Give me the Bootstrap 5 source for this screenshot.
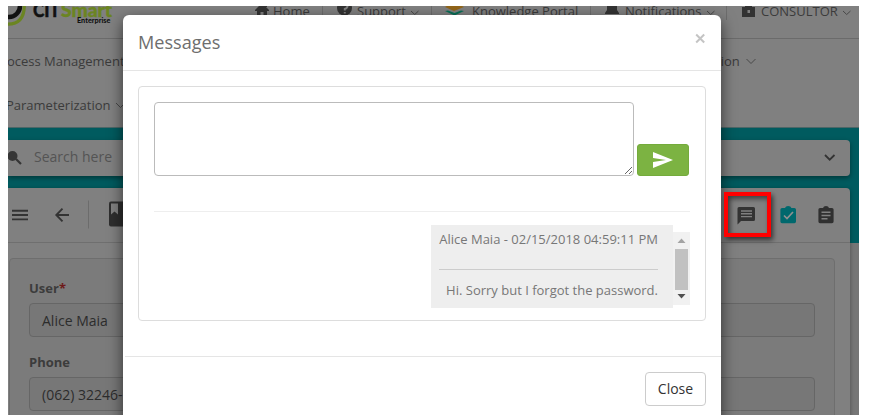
<!DOCTYPE html>
<html lang="en">
<head>
<meta charset="utf-8">
<meta name="viewport" content="width=device-width, initial-scale=1">
<title>Messages</title>
<link href="https://cdn.jsdelivr.net/npm/bootstrap@5.3.0/dist/css/bootstrap.min.css" rel="stylesheet">
<style>
body{background:#fff;font-family:"Open Sans",sans-serif;font-size:13px;line-height:18px;color:#3b3b3b;overflow:hidden}
svg{display:block;flex:none}
.app-shell{width:851px;height:409px;margin:6px 0 0 8px;background:#767676}
.top-row{height:33px;background:#808080;border-bottom:1px solid #6b6b6b}
.brand-box{width:233px;height:32px}
.top-cell{height:14px;border-right:1px solid #6d6d6d}
.top-cell span{line-height:18px;margin:-4px 0 0 -1px;display:block}
.c-home{width:82px;padding-left:14px}.c-sup{width:109px;padding-left:14px}.c-know{width:159px;padding-left:13px}.c-not{width:136px;padding-left:14px}.c-user{border:0;padding-left:15px}
.c-home span{margin-left:0}
.menu-area{height:89px;background:#808080;border-bottom:1px solid #4c6667}
.menu-line{height:44px}
.menu-line .r{margin-left:auto;width:143px}
.menu-line>span{margin-left:-1px}
.menu-line+.menu-line>span{margin-left:-2px}
.teal-zone{height:115px;background:#005b5f;padding-top:12px}
.search-strip{width:842px;height:36px;background:#808080;border-radius:0 4px 4px 0;box-shadow:0 2px 5px rgba(0,0,0,.4);font-size:14px;color:#545454;padding-right:13px}
.search-strip span{margin-top:-2px}
.work-panel{width:842px;height:240px;margin-top:12px;background:#808080;border-radius:0 4px 0 0;box-shadow:0 1px 4px rgba(0,0,0,.35)}
.tool-row{height:55px;border-bottom:1px solid #6f6f6f;padding-right:6px}
.form-box{width:826px;margin:15px 0 0 1px;height:190px;border:1px solid #6e6e6e;border-radius:4px;background:#7b7b7b;padding:19px 19px 0}
.form-box label{display:block;font-weight:700;font-size:13px;line-height:20px;height:25px;color:#3c3c3c}
.form-box .form-control{height:34px;margin-bottom:15px;background:#777;border:1px solid #666;border-radius:4px;padding:0 12px;font-size:14px;color:#2c2c2c}
.req{color:#6e1a1a}
.dialog-box{left:115px;top:9px;width:598px;height:420px;background:#fff;border-radius:6px 6px 0 0;box-shadow:0 5px 15px rgba(0,0,0,.6)}
.dialog-head{height:56px;border-bottom:1px solid #e5e5e5;padding:0 15px}
.dialog-head h4{font-size:18.1px;font-weight:400;color:#6e6e6e;line-height:24px;margin-top:-2px}
.thread{margin:15px 15px 0;height:235px;border:1px solid #ddd;border-radius:4px;padding:15px}
.thread textarea{width:480px;height:74px;border:1px solid #bbb;border-radius:4px;resize:vertical;display:block;outline:0}
.send-btn{width:52px;height:32px;margin-left:3px;border-radius:3px;background:#7cb342;border:1px solid #74ab3c}
.rule{height:1px;background:#eee;margin-top:35px}
.feed{margin-top:13px}
.bubble{width:242px;height:83px;background:#eee;color:#777;padding:5px 15px 0 8px;text-align:right;white-space:nowrap}
.bubble .cut{height:1px;background:#ccc;margin:21px 0 11px}
.scroller{width:17px;height:73px;background:#f1f1f1;margin-top:7px}
.thumb{width:13px;height:41px;background:#c1c1c1}
.dialog-foot{margin:35px 0 0 2px;border-top:1px solid #e5e5e5;padding:15px 15px 0}
.dialog-foot .btn{width:61px;height:34px;border:1px solid #ccc;border-radius:4px;background:#fff;color:#333;font-size:14px;padding:0;line-height:32px}
.focus-box{left:716px;top:186px;width:47px;height:45px;border:4px solid #f00;box-shadow:2px 3px 5px rgba(0,0,0,.6),inset 2px 3px 5px rgba(0,0,0,.5)}
</style>
<script src="https://cdn.jsdelivr.net/npm/bootstrap@5.3.0/dist/js/bootstrap.bundle.min.js"></script>
</head>
<body>
<div class="app-shell position-relative overflow-hidden">
  <header class="top-row d-flex">
    <div class="brand-box overflow-hidden">
      <svg width="125" height="32" viewBox="8 6 125 32">
        <circle cx="9" cy="6" r="11" fill="none" stroke="#111" stroke-width="4.500"/>
        <path d="M8 24.200Q24 24 24.300 6" fill="none" stroke="#6b8522" stroke-width="3.200"/>
        <text x="33" y="16.500" font-family="Lato" font-weight="900" font-size="18.500" fill="#111" stroke="#111" stroke-width=".4" textLength="27" lengthAdjust="spacingAndGlyphs">CIT</text>
        <text x="61" y="16.500" font-family="Lato" font-weight="900" font-size="18.500" fill="#6b8522" stroke="#6b8522" stroke-width=".4" textLength="51" lengthAdjust="spacingAndGlyphs">Smart</text>
        <text x="77" y="23" font-family="Lato" font-weight="900" font-size="6.600" fill="#111" textLength="33.500" lengthAdjust="spacingAndGlyphs">Enterprise</text>
      </svg>
    </div>
    <div class="top-cell c-home d-flex"><svg width="18" height="14" viewBox="0 0 18 14"><path fill="#333" d="M0 4L6-2h2l6 6v1h-2v5H8.500V6h-3v4H2V5H0zM10-3h2v4h-2z"/></svg><span>Home</span></div>
    <div class="top-cell c-sup d-flex"><svg width="21" height="14" viewBox="0 0 21 14"><circle cx="7.500" cy="2" r="7.500" fill="#333"/><path d="M5 0q0-3 2.800-3T10.500 0Q10.500 2 7.800 3v1.500M7.800 6v1.600" stroke="#808080" stroke-width="2" fill="none"/></svg><span>Support</span><svg class="ms-1" width="10" height="12" viewBox="0 0 10 12"><path d="M1 5l3.700 3.500L8.500 5" fill="none" stroke="#484848"/></svg></div>
    <div class="top-cell c-know d-flex"><svg width="28" height="14" viewBox="0 0 28 14"><path fill="#936619" d="M0 1l9-5 10 5-10 4z"/><path fill="#087057" d="M0 5l3-.5 6.500 2.500 6.500-2.500 3 .5-9.500 4.500z"/></svg><span>Knowledge Portal</span></div>
    <div class="top-cell c-not d-flex"><svg width="21" height="14" viewBox="0 0 21 14"><path fill="#333" d="M2 0q0-5 5-5t5 5v4l2 3v1H0V7l2-3z"/></svg><span>Notifications</span><svg class="ms-1" width="10" height="12" viewBox="0 0 10 12"><path d="M1 5l3.700 3.500L8.500 5" fill="none" stroke="#484848"/></svg></div>
    <div class="top-cell c-user d-flex"><svg width="20" height="14" viewBox="0 0 20 14"><path fill="#333" d="M0 1h3v-4h7v4h3v10H0z"/><path fill="#808080" d="M5.500 4h2.500v3H5.500z"/></svg><span>CONSULTOR</span><svg class="ms-1" width="10" height="12" viewBox="0 0 10 12"><path d="M1 5l3.700 3.500L8.500 5" fill="none" stroke="#484848"/></svg></div>
  </header>
  <nav class="menu-area">
    <div class="menu-line d-flex align-items-center"><span>ocess Management</span><div class="r d-flex align-items-center"><span>tion</span><svg class="ms-1" width="12" height="10" viewBox="0 0 12 10"><path d="M2.500 3L7 7.500 11.500 3" fill="none" stroke="#484848"/></svg></div></div>
    <div class="menu-line d-flex align-items-center"><span>Parameterization</span><svg class="ms-1" width="12" height="10" viewBox="0 0 12 10"><path d="M2 3l4.500 4.500L11 3" fill="none" stroke="#484848"/></svg></div>
  </nav>
  <div class="teal-zone">
    <div class="search-strip d-flex align-items-center">
      <svg width="26" height="18" viewBox="8 149 26 18"><circle cx="12.500" cy="156" r="5" fill="#353535"/><path d="M16 159l5 5" stroke="#353535" stroke-width="2.200"/></svg><span>Search here</span>
      <svg class="ms-auto" width="14" height="10" viewBox="0 0 14 10"><path d="M2 2l4.700 4.700L11.500 2" fill="none" stroke="#333" stroke-width="1.800"/></svg>
    </div>
    <div class="work-panel">
      <div class="tool-row d-flex align-items-center">
        <svg width="130" height="30" viewBox="8 201 130 30"><path d="M12 211.800h16M12 216h16M12 220.400h16" stroke="#333" stroke-width="1.900"/><path d="M69 216H56.500M62.500 209.700L56.300 216l6.200 6.300" fill="none" stroke="#333" stroke-width="1.900"/><path d="M88.500 201.500v28" stroke="#6c6c6c"/><rect x="109" y="202.500" width="22" height="25" rx="2" fill="#2e2e2e"/><path d="M111 204.500h7v11l-3.500-3-3.500 3z" fill="#808080"/></svg>
        <svg class="ms-auto" width="112" height="24" viewBox="732 204 112 24">
          <path d="M738.500 208h15q1.500 0 1.500 1.500v11q0 1.500-1.500 1.500H741l-3.500 3.500V209.500q0-1.500 1.500-1.500" fill="#333"/><path d="M741 212h11M741 214.800h11M741 217.600h11" stroke="#808080" stroke-width="1.400"/>
          <path d="M782 209h3q.5-2 3.200-2t3.200 2h3q1.600 0 1.600 1.600v12q0 1.600-1.600 1.600H782q-1.600 0-1.600-1.600v-12q0-1.600 1.600-1.600" fill="#00686d"/><path d="M784 216.500l3 3 6-6.500" fill="none" stroke="#909090" stroke-width="1.700"/>
          <path d="M820 209h3q.5-2 3-2t3 2h3q1.600 0 1.600 1.600v12q0 1.600-1.600 1.600H820q-1.600 0-1.600-1.600v-12q0-1.600 1.600-1.600" fill="#303030"/><path d="M821.500 213.200h9M821.500 216.500h9M821.500 219.800h6" stroke="#808080" stroke-width="1.400"/>
        </svg>
      </div>
      <div class="form-box">
        <label>User<span class="req">*</span></label><div class="form-control d-flex align-items-center">Alice Maia</div>
        <label>Phone</label><div class="form-control d-flex align-items-center">(062) 32246-</div>
      </div>
    </div>
  </div>
  <section class="dialog-box position-absolute" role="dialog">
    <div class="dialog-head d-flex align-items-center justify-content-between"><h4 class="mb-0">Messages</h4><svg class="mb-2" width="11" height="11" viewBox="0 0 11 11"><path d="M1.200 1.500l8 8M9.200 1.500l-8 8" stroke="#c4c4c4" stroke-width="2"/></svg></div>
    <div class="thread">
      <div class="d-flex align-items-end"><textarea aria-label="Message"></textarea><button class="send-btn p-0 d-flex align-items-center justify-content-center" aria-label="Send"><svg width="20" height="16" viewBox="0 0 20 16"><path fill="#fff" d="M0 0l20 8L0 16V10l13-2L0 6z"/></svg></button></div>
      <div class="rule"></div>
      <div class="feed d-flex justify-content-end">
        <div class="bubble"><div>Alice Maia - 02/15/2018 04:59:11 PM</div><div class="cut"></div><div>Hi. Sorry but I forgot the password.</div></div>
        <div class="scroller d-flex flex-column align-items-center"><svg width="17" height="17" viewBox="0 0 17 17"><path d="M4.500 11h8l-4-4.500z" fill="#a3a3a3"/></svg><div class="thumb"></div><svg width="17" height="15" viewBox="0 0 17 15"><path d="M4.500 4h8l-4 4.500z" fill="#505050"/></svg></div>
      </div>
    </div>
    <div class="dialog-foot d-flex justify-content-end"><button class="btn">Close</button></div>
  </section>
  <div class="focus-box position-absolute"></div>
</div>
</body>
</html>
